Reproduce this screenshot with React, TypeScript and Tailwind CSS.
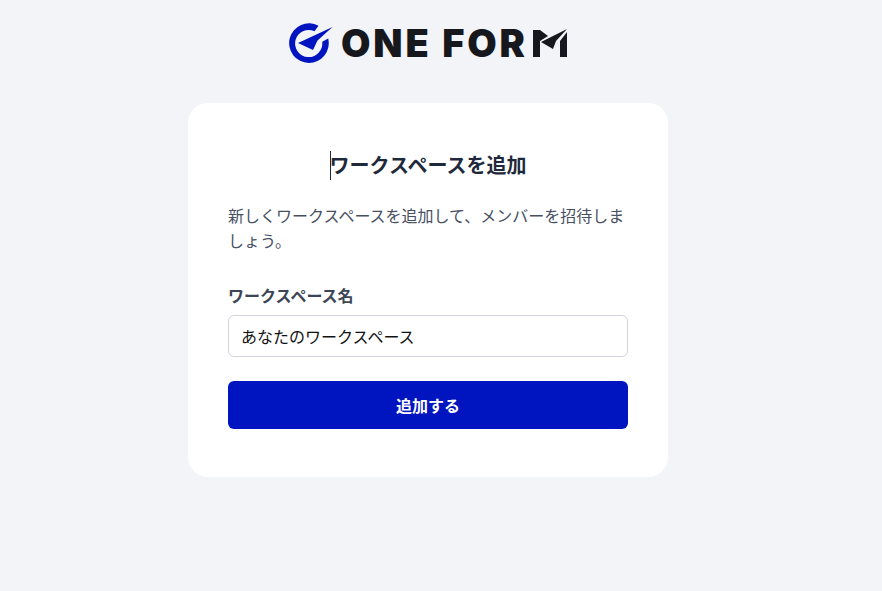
export default function App() {
  const font = { fontFamily: 'Inter, "Noto Sans CJK JP", sans-serif' };
  return (
    <div className="min-h-[591px] w-[856px] bg-[#f3f4f8] flex flex-col items-center shadow-[26px_0_0_#f3f4f8]" style={font}>
      <div className="h-[103px] w-full flex items-start justify-center pt-[23px]">
        <div className="flex items-center h-[40px] w-[278px]">
          <svg width="44" height="40" viewBox="0 0 44 40" className="shrink-0">
            <path d="M29.5 2.8A19.8 19.8 0 1 0 39.2 15.5L33.2 18.8A13.6 13.6 0 1 1 25.5 8.2Z" fill="#0015bf" />
            <path d="M43.5 4 L9 20 L24 27 L28.5 17.5 Z" fill="#0015bf" />
          </svg>
          <span className="ml-[8px] text-[38px] leading-[40px] font-black text-[#16181d] whitespace-nowrap tracking-[2.9px]" style={{ fontFamily: 'Inter, sans-serif' }}>ONE FOR</span>
          <svg width="35" height="30" viewBox="0 0 35 30" className="shrink-0 ml-[5px] mt-[2px]">
            <path d="M0 1H7L15 7L7 12V28H0Z" fill="#16181d" />
            <path d="M34 0L8 13L20 20L23 12Z" fill="#16181d" />
            <path d="M27 12L34 3V28H27Z" fill="#16181d" />
          </svg>
        </div>
      </div>
      <main className="w-[480px] h-[374px] bg-white rounded-[20px] px-10 pt-[48px]">
        <h1 className="text-xl leading-[30px] font-bold text-[#1e293b] text-center relative">
          <span className="relative">
            <span className="absolute left-0 top-[-3px] h-[29px] w-px bg-[#1e293b]" />
            ワークスペースを追加
          </span>
        </h1>
        <p className="mt-[23px] text-base leading-[25px] text-[#475063]">
          新しくワークスペースを追加して、メンバーを招待しましょう。
        </p>
        <label className="block mt-[30px] text-base leading-6 font-semibold text-[#3c4556]">ワークスペース名</label>
        <input
          readOnly
          value="あなたのワークスペース"
          className="block mt-[7px] w-full h-[42px] rounded-md border border-[#d1d5db] px-3 text-base text-[#111] outline-none bg-white"
        />
        <button className="block mt-6 w-full h-12 pt-px rounded-md bg-[#0015bf] text-white text-base font-bold">追加する</button>
      </main>
    </div>
  );
}
